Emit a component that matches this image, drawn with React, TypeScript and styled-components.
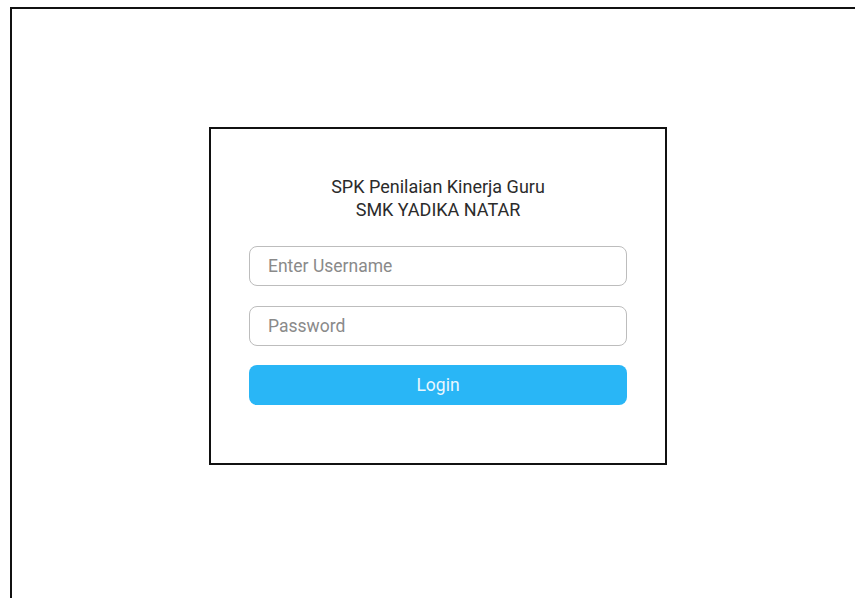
import styled, { createGlobalStyle } from 'styled-components';

const GlobalStyle = createGlobalStyle`
  html, body {
    margin: 0;
    padding: 0;
    background: #ffffff;
    font-family: Roboto, "Liberation Sans", sans-serif;
  }
`;

const Page = styled.div`
  margin: 7px 0 0 10px;
  min-height: 591px;
  box-sizing: border-box;
  border-top: 2px solid #111;
  border-left: 2px solid #111;
  padding: 118px 0 0 197px;
`;

const Card = styled.form`
  width: 458px;
  height: 338px;
  box-sizing: border-box;
  border: 2px solid #111;
  padding: 46px 38px 0;
  display: flex;
  flex-direction: column;
`;

const Title = styled.h1`
  margin: 0 0 25px;
  font-size: 18px;
  line-height: 23px;
  font-weight: 400;
  color: #2b2b2b;
  text-align: center;
`;

const Field = styled.input`
  height: 40px;
  width: 100%;
  box-sizing: border-box;
  border: 1px solid #bdbdbd;
  border-radius: 8px;
  padding: 0 18px;
  margin-bottom: 20px;
  font-family: inherit;
  font-size: 17.5px;
  color: #333;
  outline: none;

  &::placeholder {
    color: #8a8a8a;
  }
`;

const LoginButton = styled.button`
  height: 40px;
  width: 100%;
  margin-top: -1px;
  border: none;
  border-radius: 8px;
  background: #29b6f6;
  color: #eaf7fe;
  font-family: inherit;
  font-size: 17.5px;
  cursor: pointer;
`;

export default function App() {
  return (
    <>
      <GlobalStyle />
      <Page>
        <Card onSubmit={(e) => e.preventDefault()}>
          <Title>
            SPK Penilaian Kinerja Guru
            <br />
            SMK YADIKA NATAR
          </Title>
          <Field type="text" placeholder="Enter Username" />
          <Field type="password" placeholder="Password" />
          <LoginButton type="submit">Login</LoginButton>
        </Card>
      </Page>
    </>
  );
}
